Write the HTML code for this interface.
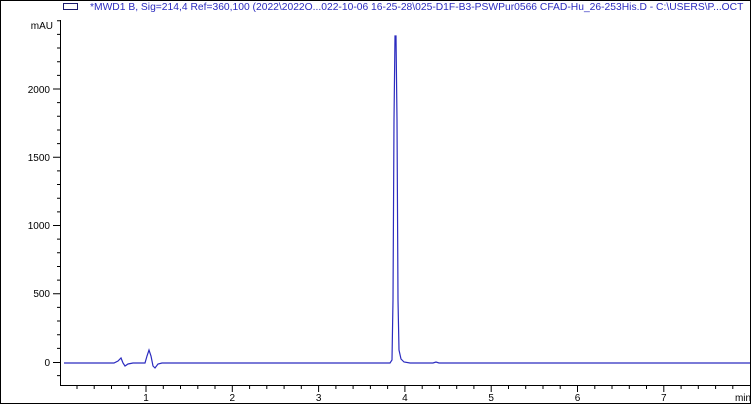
<!DOCTYPE html>
<html><head><meta charset="utf-8"><style>
html,body{margin:0;padding:0;background:#fff;}
svg{display:block;font-family:"Liberation Sans",Arial,sans-serif;}
</style></head><body>
<svg width="751" height="404" viewBox="0 0 751 404" xmlns="http://www.w3.org/2000/svg">
<rect x="0.5" y="0.5" width="750" height="403" fill="#fff" stroke="#000"/>
<rect x="63.5" y="3.5" width="14" height="6" fill="none" stroke="#1a1a6e"/>
<text x="90" y="10" font-size="10.3" fill="#2b2bbf">*MWD1 B, Sig=214,4 Ref=360,100 (2022\2022O...022-10-06 16-25-28\025-D1F-B3-PSWPur0566 CFAD-Hu_26-253His.D - C:\USERS\P...OCT</text>
<g stroke="#000" stroke-width="1" fill="none">
<path d="M60.5 20V385.5H751"/>
<path d="M53 362.5H60M53 293.75H60M53 225.5H60M53 157.25H60M53 89H60"/>
<path d="M57 375.65H60M57 348.35H60M57 334.7H60M57 321.05H60M57 307.4H60M57 280.1H60M57 266.45H60M57 252.8H60M57 239.15H60M57 211.85H60M57 198.2H60M57 184.55H60M57 170.9H60M57 143.6H60M57 129.95H60M57 116.3H60M57 102.65H60M57 75.35H60M57 61.7H60M57 48.05H60M57 34.4H60M57 20.75H60"/>
<path d="M146 385V392M232.3 385V392M318.6 385V392M404.9 385V392M491.2 385V392M577.5 385V392M663.8 385V392"/>
<path d="M77 385V389M94.2 385V389M111.5 385V389M128.7 385V389M163.3 385V389M180.5 385V389M197.8 385V389M215 385V389M249.6 385V389M266.8 385V389M284.1 385V389M301.3 385V389M335.9 385V389M353.1 385V389M370.4 385V389M387.6 385V389M422.2 385V389M439.4 385V389M456.7 385V389M473.9 385V389M508.5 385V389M525.7 385V389M543 385V389M560.2 385V389M594.8 385V389M612 385V389M629.3 385V389M646.5 385V389M681.1 385V389M698.3 385V389M715.6 385V389M732.8 385V389"/>
</g>
<g font-size="10" fill="#000" text-anchor="end">
<text x="53" y="29">mAU</text>
<text x="50" y="93">2000</text>
<text x="50" y="161">1500</text>
<text x="50" y="229">1000</text>
<text x="50" y="297">500</text>
<text x="50" y="366">0</text>
</g>
<g font-size="10" fill="#000" text-anchor="middle">
<text x="146" y="401">1</text><text x="232.3" y="401">2</text><text x="318.6" y="401">3</text><text x="404.9" y="401">4</text><text x="491.2" y="401">5</text><text x="577.5" y="401">6</text><text x="663.8" y="401">7</text>
<text x="743" y="401">min</text>
</g>
<path d="M64 363H114L118 361L121 358L123 363L125 366L128 364L133 363H145L147 356L149 350L151 356L153 366L155 368L158 364L162 363H390L392 360L393 300L394 120L395 36L396 36L397 120L398 300L399 350L401 359L404 362L410 363H433L436 362L439 363H750" fill="none" stroke="#2b2bbf" stroke-width="1.2"/>
</svg>
</body></html>
